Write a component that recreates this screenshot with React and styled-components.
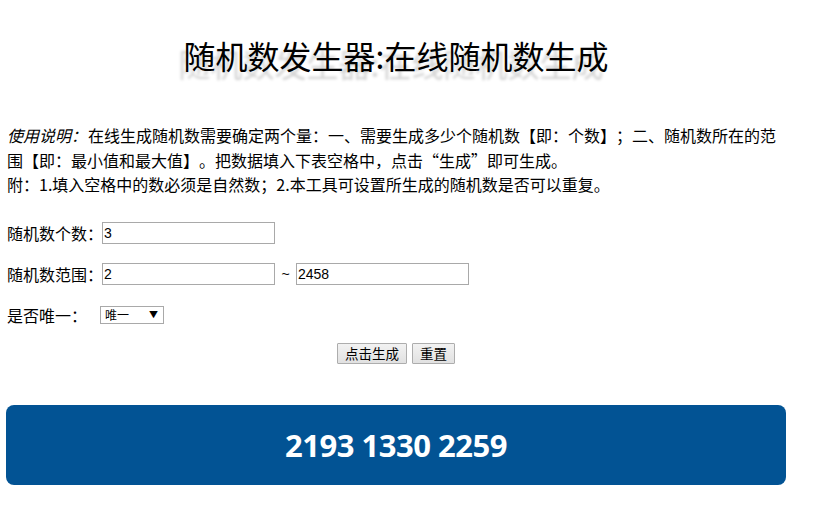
import React from "react";
import styled, { createGlobalStyle } from "styled-components";

const Global = createGlobalStyle`
  html, body { margin: 0; padding: 0; background: #fff; }
  body {
    font-family: "Noto Sans CJK SC", "Liberation Sans", sans-serif;
    color: #000;
    text-spacing-trim: space-all;
    font-kerning: none;
  }
`;

const Page = styled.div`
  width: 780px;
  margin-left: 6px;
  padding-top: 27px;
`;

const Title = styled.h1`
  margin: 0;
  text-align: center;
  font-weight: normal;
  font-size: 32px;
  line-height: 56px;
  text-shadow: -5px 8px 3px #d2d2d2;
`;

const Intro = styled.p`
  margin: 40px 0 0 1px;
  font-size: 16px;
  line-height: 24.5px;
`;

const Em = styled.em`
  font-style: italic;
  padding-right: 1px;
`;

const Form = styled.div`
  margin-top: 25px;
  display: flex;
  flex-direction: column;
  gap: 19px;
`;

const Row = styled.div`
  display: flex;
  align-items: center;
  font-size: 16px;
  height: 22px;
  padding-left: 1px;
`;

const Label = styled.span`
  width: ${(p) => p.w || 95}px;
  white-space: nowrap;
`;

const Input = styled.input`
  box-sizing: border-box;
  width: 173px;
  height: 22px;
  border: 1px solid #a9a9a9;
  padding: 1px 1px;
  font-family: "Liberation Sans", sans-serif;
  font-size: 14px;
  color: #000;
  outline: none;
`;

const Tilde = styled.span`
  width: 21px;
  text-align: center;
  font-family: "Liberation Sans", sans-serif;
  font-size: 14px;
`;

const Select = styled.div`
  box-sizing: border-box;
  width: 64px;
  height: 18px;
  border: 1px solid #a9a9a9;
  display: flex;
  align-items: center;
  justify-content: space-between;
  padding: 0 5px 0 4px;
  font-size: 12px;
  background: #fff;
`;

const Arrow = styled.span`
  font-size: 9px;
  line-height: 1;
`;

const Buttons = styled.div`
  display: flex;
  justify-content: center;
  gap: 5px;
  margin-top: -2px;
`;

const Button = styled.button`
  box-sizing: border-box;
  height: 21px;
  padding: 0 7px;
  border: 1px solid #adadad;
  border-radius: 1px;
  background: linear-gradient(#f2f2f2, #e1e1e1);
  font-family: "Noto Sans CJK SC", sans-serif;
  font-size: 13.5px;
  line-height: 19px;
  color: #000;
`;

const Result = styled.div`
  margin-top: 41px;
  height: 80px;
  background: #025394;
  border-radius: 8px;
  display: flex;
  align-items: center;
  justify-content: center;
  color: #fff;
  font-family: "Open Sans", "Liberation Sans", sans-serif;
  font-weight: bold;
  font-size: 31px;
  letter-spacing: -0.5px;
`;

export default function App() {
  return (
    <>
      <Global />
      <Page>
        <Title>随机数发生器:在线随机数生成</Title>
        <Intro>
          <Em>使用说明：</Em>在线生成随机数需要确定两个量：一、需要生成多少个随机数【即：个数】；二、随机数所在的范围【即：最小值和最大值】。把数据填入下表空格中，点击“生成”即可生成。
          <br />
          附：1.填入空格中的数必须是自然数；2.本工具可设置所生成的随机数是否可以重复。
        </Intro>
        <Form>
          <Row>
            <Label>随机数个数：</Label>
            <Input defaultValue="3" />
          </Row>
          <Row>
            <Label>随机数范围：</Label>
            <Input defaultValue="2" />
            <Tilde>~</Tilde>
            <Input defaultValue="2458" />
          </Row>
          <Row>
            <Label w={93}>是否唯一：</Label>
            <Select>
              <span>唯一</span>
              <Arrow>▼</Arrow>
            </Select>
          </Row>
          <Buttons>
            <Button>点击生成</Button>
            <Button>重置</Button>
          </Buttons>
        </Form>
        <Result>2193 1330 2259</Result>
      </Page>
    </>
  );
}
